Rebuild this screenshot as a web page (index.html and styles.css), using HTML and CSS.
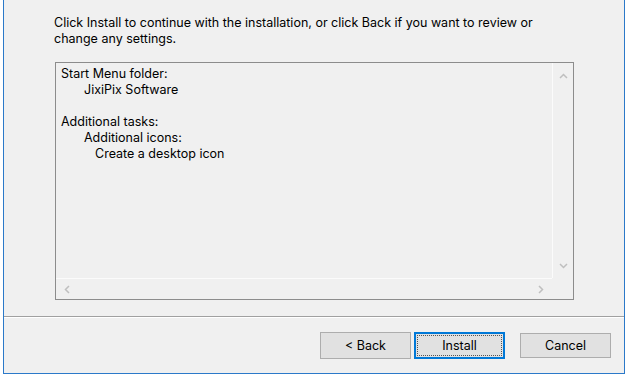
FILE: index.html
```html
<!DOCTYPE html>
<html>
<head>
  <title>Setup - Ready to Install</title>
  <link rel="stylesheet" href="styles.css">
</head>
<body>

  <div class="window">
    <div class="page">
      <p class="intro">Click Install to continue with the installation, or click Back if you want to review or<br>change any settings.</p>

      <div class="memo">
        <div class="memo-text">
          <div>Start Menu folder:</div>
          <div class="lvl1">JixiPix Software</div>
          <div class="blank"></div>
          <div>Additional tasks:</div>
          <div class="lvl1">Additional icons:</div>
          <div class="lvl2">Create a desktop icon</div>
        </div>
        <div class="vscroll">
          <svg class="arrow" width="9" height="6" viewBox="0 0 9 6"><polyline points="1,5 4.5,1.5 8,5" /></svg>
          <svg class="arrow" width="9" height="6" viewBox="0 0 9 6"><polyline points="1,1 4.5,4.5 8,1" /></svg>
        </div>
        <div class="hscroll">
          <svg class="arrow" width="6" height="9" viewBox="0 0 6 9"><polyline points="5,1 1.5,4.5 5,8" /></svg>
          <svg class="arrow" width="6" height="9" viewBox="0 0 6 9"><polyline points="1,1 4.5,4.5 1,8" /></svg>
        </div>
        <div class="corner"></div>
      </div>
    </div>

    <div class="footer">
      <div class="nav-btns">
        <button class="btn">&lt; Back</button>
        <button class="btn default"><span class="focus">Install</span></button>
      </div>
      <button class="btn cancel">Cancel</button>
    </div>
  </div>

</body>
</html>
```

FILE: styles.css
```css
body {
  margin: 0;
  background-color: #ffffff;
  font-family: 'Inter', 'Open Sans', sans-serif;
  font-size: 12.5px;
  color: #000;
}

.window {
  margin-left: 3px;
  width: 620px;
  height: 373px;
  background-color: #f0f0f0;
  border: 1px solid #2b79c9;
  border-top: none;
  display: flex;
  flex-direction: column;
}

.page {
  flex: 1;
  padding: 15px 0 0 50px;
  border-bottom: 1px solid #a0a0a0;
  box-shadow: 0 1px 0 #ffffff;
}

.intro {
  margin: 0;
  line-height: 16px;
}

.memo {
  margin: 15px 0 0 1px;
  width: 517px;
  height: 236px;
  border: 1px solid #8c8c8c;
  display: grid;
  grid-template-columns: 1fr 21px;
  grid-template-rows: 1fr 21px;
}

.memo-text {
  padding: 3px 5px;
  line-height: 16px;
}

.blank {
  height: 16px;
}

.lvl1 {
  padding-left: 23px;
}

.lvl2 {
  padding-left: 34px;
}

.vscroll {
  border-left: 1px solid #fbfbfb;
  display: flex;
  flex-direction: column;
  justify-content: space-between;
  align-items: center;
  padding: 10px 0 9px;
}

.hscroll {
  border-top: 1px solid #fbfbfb;
  display: flex;
  justify-content: space-between;
  align-items: center;
  padding: 0 8px 0 8px;
}

.arrow polyline {
  fill: none;
  stroke: #bfbfbf;
  stroke-width: 1.5;
}

.footer {
  height: 56px;
  display: flex;
  justify-content: flex-end;
  align-items: flex-start;
  padding: 15px 13px 0 0;
  box-sizing: border-box;
  gap: 15px;
}

.nav-btns {
  display: flex;
  gap: 3px;
}

.btn {
  width: 91px;
  height: 27px;
  padding: 0;
  font-family: 'Inter', 'Open Sans', sans-serif;
  font-size: 12.5px;
  color: #000;
  background: #e1e1e1;
  border: 1px solid #adadad;
}

.btn.default {
  border: 2px solid #0078d7;
  background: #e1e1e1;
  padding: 1px;
}

.focus {
  display: flex;
  align-items: center;
  justify-content: center;
  height: 100%;
  outline: 1px dotted #555;
  outline-offset: -1px;
}

.cancel {
  margin-top: 1px;
  height: 25px;
}
```
